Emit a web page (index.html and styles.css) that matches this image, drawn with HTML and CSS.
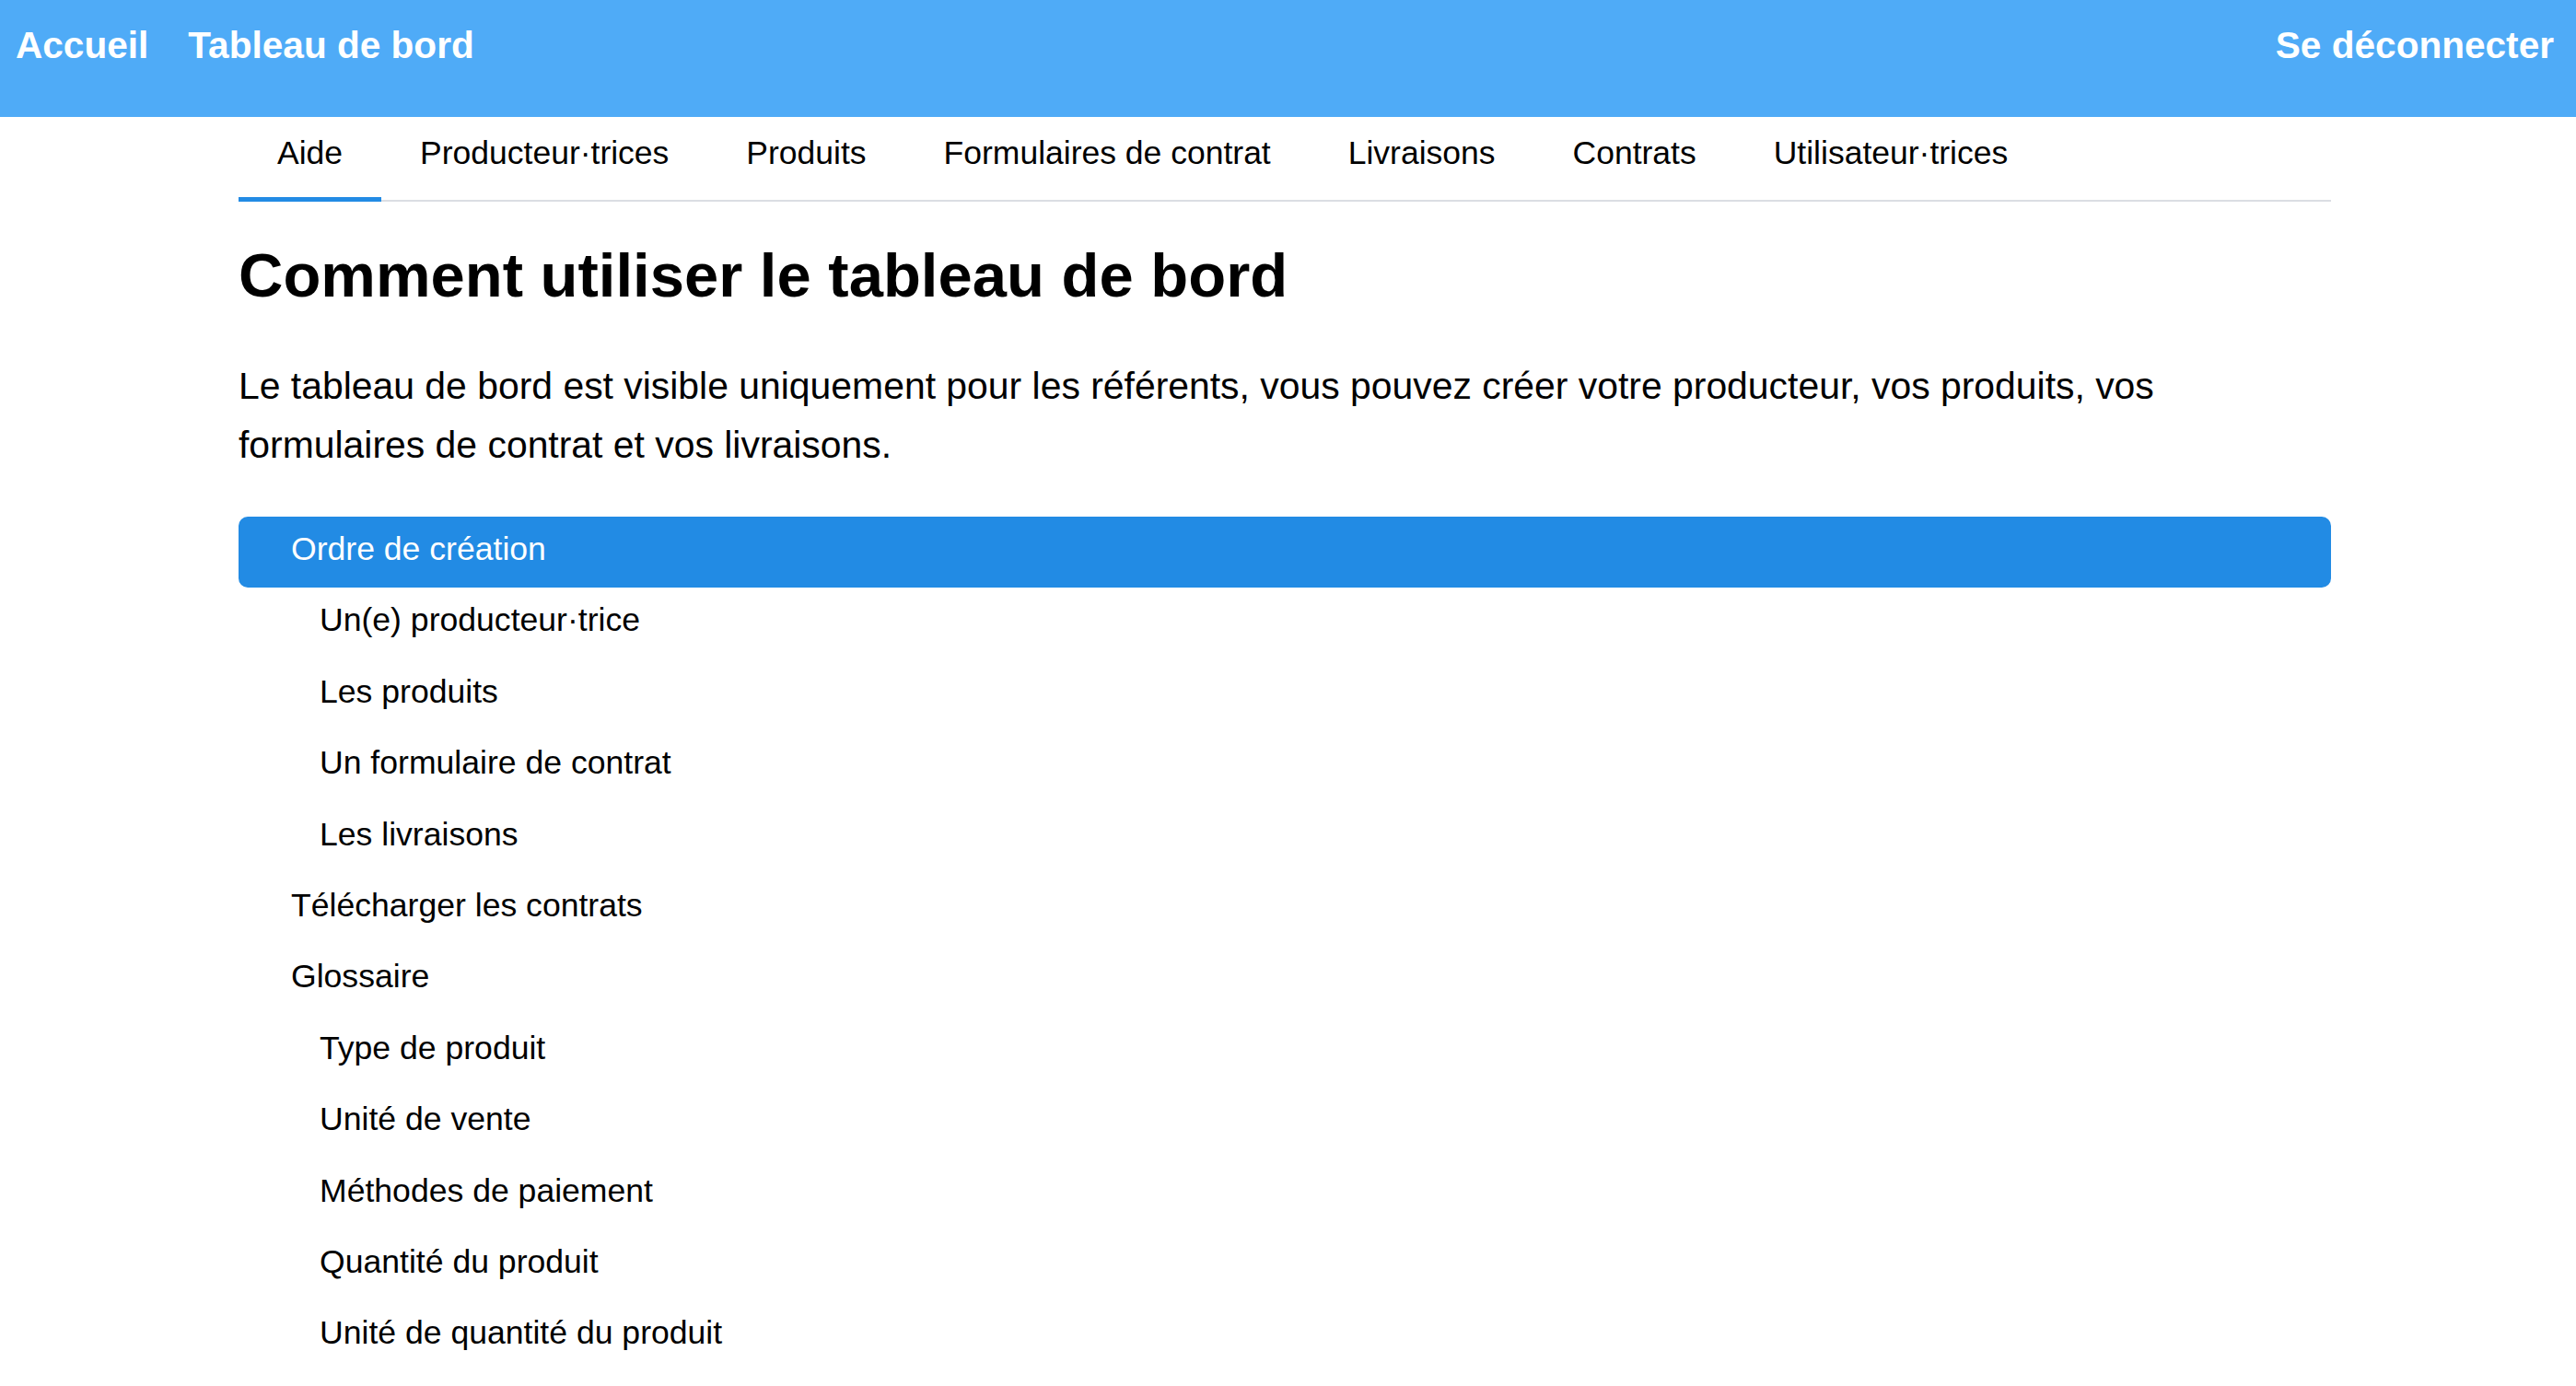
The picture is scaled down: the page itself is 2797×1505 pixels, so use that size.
FILE: index.html
```html
<!DOCTYPE html>
<html lang="fr">
<head>
<meta charset="utf-8">
<title>Tableau de bord - Aide</title>
<link rel="stylesheet" href="styles.css">
</head>
<body>
<header class="topbar">
  <nav class="topbar-left">
    <a class="topbar-link" href="#">Accueil</a>
    <a class="topbar-link" href="#">Tableau de bord</a>
  </nav>
  <a class="topbar-link" href="#">Se déconnecter</a>
</header>
<div class="page">
  <nav class="tabs">
    <a class="tab tab-active" href="#">Aide</a>
    <a class="tab" href="#">Producteur·trices</a>
    <a class="tab" href="#">Produits</a>
    <a class="tab" href="#">Formulaires de contrat</a>
    <a class="tab" href="#">Livraisons</a>
    <a class="tab" href="#">Contrats</a>
    <a class="tab" href="#">Utilisateur·trices</a>
  </nav>
  <h1 class="title">Comment utiliser le tableau de bord</h1>
  <p class="intro">Le tableau de bord est visible uniquement pour les référents, vous pouvez créer votre producteur, vos produits, vos formulaires de contrat et vos livraisons.</p>
  <ul class="menu">
    <li class="menu-item menu-active">Ordre de création</li>
    <li class="menu-item menu-sub">Un(e) producteur·trice</li>
    <li class="menu-item menu-sub">Les produits</li>
    <li class="menu-item menu-sub">Un formulaire de contrat</li>
    <li class="menu-item menu-sub">Les livraisons</li>
    <li class="menu-item">Télécharger les contrats</li>
    <li class="menu-item">Glossaire</li>
    <li class="menu-item menu-sub">Type de produit</li>
    <li class="menu-item menu-sub">Unité de vente</li>
    <li class="menu-item menu-sub">Méthodes de paiement</li>
    <li class="menu-item menu-sub">Quantité du produit</li>
    <li class="menu-item menu-sub">Unité de quantité du produit</li>
  </ul>
</div>
</body>
</html>
```
FILE: styles.css
```css
html, body {
  margin: 0;
  padding: 0;
  background: #ffffff;
}

body {
  font-family: "Liberation Sans", Arial, Helvetica, sans-serif;
  color: #000000;
}

a {
  color: inherit;
  text-decoration: none;
}

.topbar {
  height: 127px;
  box-sizing: border-box;
  background: #4fabf7;
  display: flex;
  justify-content: space-between;
  align-items: flex-start;
  padding: 26px 24px 0 17px;
}

.topbar-left {
  display: flex;
  gap: 43px;
}

.topbar-link {
  color: #ffffff;
  font-weight: bold;
  font-size: 40.6px;
  line-height: 47px;
}

.page {
  max-width: 2272px;
  margin: 0 auto;
  padding-right: 7px;
}

.tabs {
  display: flex;
  border-bottom: 2px solid #dbdee3;
}

.tab {
  font-size: 35.5px;
  line-height: 41px;
  padding: 19px 42px 27px;
  border-bottom: 5px solid transparent;
  margin-bottom: -2px;
}

.tab-active {
  border-bottom-color: #228be4;
}

.title {
  margin: 41px 0 0;
  font-size: 67px;
  line-height: 77px;
  font-weight: bold;
}

.intro {
  margin: 50px 0 0;
  font-size: 40.9px;
  line-height: 64px;
}

.menu {
  list-style: none;
  margin: 46px 0 0;
  padding: 0;
}

.menu-item {
  font-size: 35.6px;
  line-height: 41px;
  padding: 15px 0 21.4px 57px;
  border-radius: 10px;
}

.menu-sub {
  padding-left: 88px;
}

.menu-active {
  background: #228be4;
  color: #ffffff;
}
```
